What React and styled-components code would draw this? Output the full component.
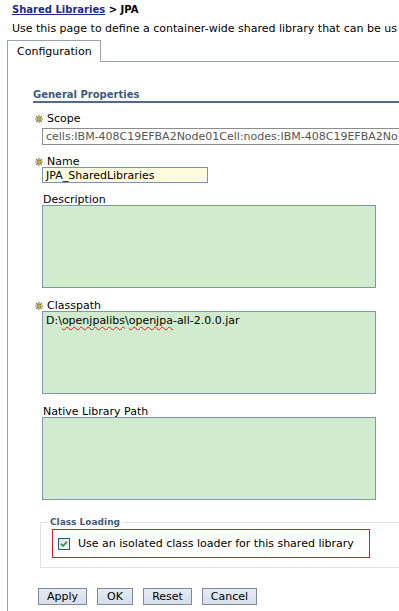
import styled, { createGlobalStyle } from "styled-components";

const Global = createGlobalStyle`
  html, body {
    margin: 0;
    padding: 0;
    background: #ffffff;
    overflow: hidden;
  }
  body {
    font-family: "DejaVu Sans", Verdana, sans-serif;
    font-size: 11px;
    color: #000000;
  }
`;

const Page = styled.div`
  width: 399px;
  height: 611px;
  box-sizing: border-box;
  padding: 3px 0 0 7px;
  overflow: hidden;
  display: flex;
  flex-direction: column;
`;

const Crumbs = styled.div`
  padding-left: 5px;
  line-height: 13px;
  font-weight: bold;
  font-size: 10px;
  a {
    color: #1b2a8c;
    text-decoration: underline;
  }
`;

const Intro = styled.div`
  padding-left: 5px;
  margin-top: 6px;
  line-height: 13px;
  white-space: nowrap;
`;

const TabRow = styled.div`
  display: flex;
  margin-top: 5px;
  height: 22px;
  flex-shrink: 0;
`;

const Tab = styled.div`
  border: 1px solid #9aa3b0;
  border-bottom: none;
  padding: 0 8px 0 9px;
  display: flex;
  align-items: center;
  line-height: 13px;
`;

const TabRest = styled.div`
  flex: 1;
  border-bottom: 1px solid #9aa3b0;
`;

const Panel = styled.div`
  flex: 1;
  border-left: 1px solid #9aa3b0;
  padding: 27px 0 0 25px;
`;

const SectionTitle = styled.div`
  color: #3d5b80;
  font-weight: bold;
  font-size: 10px;
  line-height: 12px;
  border-bottom: 2px solid #4f6a8e;
`;

const Field = styled.div`
  padding-left: 9px;
  margin-top: ${(p) => p.$top}px;
`;

const Label = styled.div`
  display: flex;
  align-items: center;
  line-height: 11px;
  height: 11px;
  margin-left: ${(p) => (p.$req ? "-7px" : "1px")};
  svg {
    margin-right: 4px;
  }
`;

const TextInput = styled.div`
  box-sizing: border-box;
  width: ${(p) => p.$w};
  height: ${(p) => p.$h}px;
  margin-top: ${(p) => p.$gap}px;
  border: 1px solid ${(p) => (p.$readonly ? "#8c8c8c" : "#7a96ad")};
  background: ${(p) => p.$bg};
  color: ${(p) => (p.$readonly ? "#555555" : "#000000")};
  padding: 1px 3px;
  line-height: 13px;
  white-space: nowrap;
  overflow: hidden;
`;

const TextArea = styled.div`
  box-sizing: border-box;
  width: 334px;
  height: 83px;
  border: 1px solid #7b98ae;
  background: #d0ebcd;
  padding: 2px 3px;
  line-height: 13px;
  white-space: nowrap;
`;

const Misspelled = styled.span`
  text-decoration: underline wavy #e02020;
  text-decoration-thickness: 1px;
  text-underline-offset: 2px;
`;

const Fieldset = styled.div`
  position: relative;
  box-sizing: border-box;
  margin: 22px 0 0 7px;
  border: 1px solid #e2e2e2;
  border-right: none;
  height: 46px;
  padding: 6px 0 0 11px;
`;

const Legend = styled.div`
  position: absolute;
  top: -7px;
  left: 7px;
  padding: 0 2px;
  background: #ffffff;
  color: #3d5b80;
  font-weight: bold;
  font-size: 9px;
  line-height: 12px;
`;

const Highlight = styled.div`
  box-sizing: border-box;
  width: 318px;
  height: 29px;
  border: 1px solid #c2262c;
  display: flex;
  align-items: center;
  padding-left: 5px;
  svg {
    margin-right: 8px;
  }
`;

const Buttons = styled.div`
  display: flex;
  gap: 10px;
  margin: 20px 0 0 5px;
`;

const Button = styled.div`
  box-sizing: border-box;
  height: 17px;
  width: ${(p) => p.$w}px;
  border: 1px solid #7f8a9c;
  background: linear-gradient(#e6ebf3, #d6deea);
  display: flex;
  align-items: center;
  justify-content: center;
  line-height: 13px;
`;

function Required() {
  return (
    <svg width="8" height="8" viewBox="0 0 8 8">
      <g stroke="#8a7a30" strokeWidth="1.2" strokeLinecap="round">
        <line x1="4" y1="0.5" x2="4" y2="7.5" />
        <line x1="0.5" y1="4" x2="7.5" y2="4" />
        <line x1="1.5" y1="1.5" x2="6.5" y2="6.5" />
        <line x1="6.5" y1="1.5" x2="1.5" y2="6.5" />
      </g>
      <circle cx="4" cy="4" r="1.3" fill="#c8b040" />
    </svg>
  );
}

function CheckBox() {
  return (
    <svg width="12" height="12" viewBox="0 0 12 12">
      <defs>
        <linearGradient id="cb" x1="0" y1="0" x2="1" y2="1">
          <stop offset="0" stopColor="#dcdcd6" />
          <stop offset="1" stopColor="#ffffff" />
        </linearGradient>
      </defs>
      <rect x="0.5" y="0.5" width="11" height="11" fill="url(#cb)" stroke="#1f5a8a" />
      <path d="M3 5.8 L5 8 L9 3.6" fill="none" stroke="#2ba32b" strokeWidth="1.8" />
    </svg>
  );
}

export default function App() {
  return (
    <Page>
      <Global />
      <Crumbs>
        <a href="#">Shared Libraries</a> &gt; JPA
      </Crumbs>
      <Intro>Use this page to define a container-wide shared library that can be us</Intro>
      <TabRow>
        <Tab>Configuration</Tab>
        <TabRest />
      </TabRow>
      <Panel>
        <SectionTitle>General Properties</SectionTitle>

        <Field $top={10}>
          <Label $req>
            <Required />
            Scope
          </Label>
          <TextInput $w="400px" $h={17} $gap={4} $bg="#ffffff" $readonly>
            cells:IBM-408C19EFBA2Node01Cell:nodes:IBM-408C19EFBA2No
          </TextInput>
        </Field>

        <Field $top={11}>
          <Label $req>
            <Required />
            Name
          </Label>
          <TextInput $w="166px" $h={16} $gap={0} $bg="#fffbde">
            JPA_SharedLibraries
          </TextInput>
        </Field>

        <Field $top={11}>
          <Label>Description</Label>
          <TextArea />
        </Field>

        <Field $top={12}>
          <Label $req>
            <Required />
            Classpath
          </Label>
          <TextArea>
            D:\<Misspelled>openjpalibs</Misspelled>\<Misspelled>openjpa</Misspelled>-all-2.0.0.jar
          </TextArea>
        </Field>

        <Field $top={12}>
          <Label>Native Library Path</Label>
          <TextArea />
        </Field>

        <Fieldset>
          <Legend>Class Loading</Legend>
          <Highlight>
            <CheckBox />
            Use an isolated class loader for this shared library
          </Highlight>
        </Fieldset>

        <Buttons>
          <Button $w={49}>Apply</Button>
          <Button $w={36}>OK</Button>
          <Button $w={49}>Reset</Button>
          <Button $w={55}>Cancel</Button>
        </Buttons>
      </Panel>
    </Page>
  );
}
